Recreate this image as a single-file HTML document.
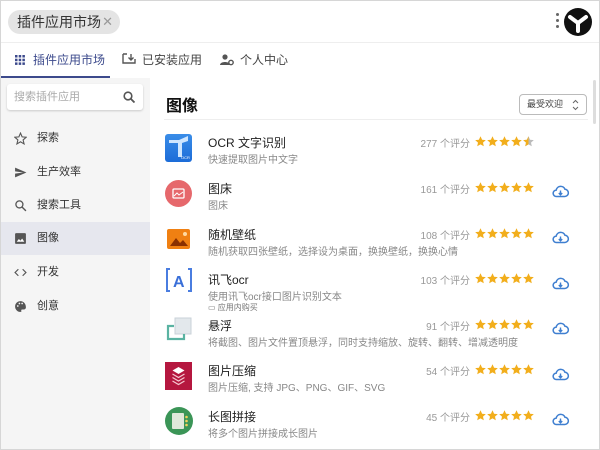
<!DOCTYPE html>
<html><head><meta charset="utf-8"><style>
*{margin:0;padding:0;box-sizing:border-box}
body{width:600px;height:450px;overflow:hidden;background:#fff;font-family:"Liberation Sans","Noto Sans CJK SC",sans-serif;position:relative;color:#222}
.abs{position:absolute}
.frame{position:absolute;left:0;top:0;width:600px;height:450px;border:1px solid #d6d6d6;pointer-events:none}
.chip{left:8px;top:10px;height:24px;width:112px;border-radius:12px;background:#e4e4e4;font-size:14px;line-height:24px;padding-left:9px;color:#333}
.chip span{color:#999;font-size:13px;position:absolute;right:7px;top:0}
.tab{top:52px;font-size:12px;color:#444;line-height:16px}
.sidebar{left:1px;top:78px;width:149px;height:371px;background:#f5f5f5}
.search{left:7px;top:84px;width:136px;height:26px;background:#fff;border-radius:3px;box-shadow:0 1px 2px rgba(0,0,0,.18);font-size:11px;color:#aaa;line-height:26px;padding-left:7px}
.nav{left:1px;width:149px;height:33px;font-size:11px;color:#333;line-height:33px;padding-left:36px}
.nav svg{position:absolute;left:13px;top:10px}
.title{left:208px;font-size:12px;color:#222}
.desc{left:208px;font-size:10px;color:#888}
.cnt{font-size:10px;color:#999;text-align:right;width:80px;left:390px}
.stars{left:475px}
.cloud{left:552px}
</style></head><body>
<svg width="0" height="0" style="position:absolute"><defs>
<path id="s" d="M5.5 0.3l1.6 3.4 3.7.4-2.8 2.5.8 3.7-3.3-1.9-3.3 1.9.8-3.7L.2 4.1l3.7-.4z"/>
<g id="five" fill="#f2ae1c"><use href="#s" x="0"/><use href="#s" x="12"/><use href="#s" x="24"/><use href="#s" x="36"/><use href="#s" x="48"/></g>
<g id="c"><path d="M4.5 11.5a3.2 3.2 0 01-.3-6.4A4.6 4.6 0 0113 4.3a3.6 3.6 0 01-.5 7.2z" fill="none" stroke="#3f7fd0" stroke-width="1.5"/><path d="M8.5 5.5v4M6.8 8l1.7 1.8L10.2 8" stroke="#3f7fd0" stroke-width="1.4" fill="none"/></g>
</defs></svg>
<div class="abs chip">插件应用市场<span>✕</span></div>
<div class="abs" style="left:556px;top:13px;width:3px;height:3px;background:#666;border-radius:50%;box-shadow:0 6px 0 #666,0 12px 0 #666"></div>
<svg class="abs" style="left:564px;top:8px" width="28" height="28" viewBox="0 0 28 28"><circle cx="14" cy="14" r="14" fill="#111"/><path d="M6 9 L14 15 L22 9 M14 15 L14 23" stroke="#fff" stroke-width="4" fill="none" stroke-linecap="round"/></svg>
<div class="abs" style="left:0;top:42px;width:600px;height:1px;background:#eee"></div>
<svg class="abs" style="left:15px;top:55px" width="10" height="10"><g fill="#3c4a8c"><rect x="0" y="0" width="2.5" height="2.5"/><rect x="3.7" y="0" width="2.5" height="2.5"/><rect x="7.4" y="0" width="2.5" height="2.5"/><rect x="0" y="3.7" width="2.5" height="2.5"/><rect x="3.7" y="3.7" width="2.5" height="2.5"/><rect x="7.4" y="3.7" width="2.5" height="2.5"/><rect x="0" y="7.4" width="2.5" height="2.5"/><rect x="3.7" y="7.4" width="2.5" height="2.5"/><rect x="7.4" y="7.4" width="2.5" height="2.5"/></g></svg>
<div class="abs tab" style="left:33px;color:#3c4a8c">插件应用市场</div>
<div class="abs" style="left:1px;top:76px;width:109px;height:2px;background:#3c4a8c"></div>
<svg class="abs" style="left:122px;top:53px" width="14" height="12"><path d="M1 1h4M1 1v9h12V6M9 1v6M6.5 4.5L9 7l2.5-2.5" stroke="#555" stroke-width="1.4" fill="none"/></svg>
<div class="abs tab" style="left:142px">已安装应用</div>
<svg class="abs" style="left:220px;top:54px" width="14" height="12"><circle cx="5" cy="3" r="2.6" fill="#555"/><path d="M0 11c0-4 10-4 10 0z" fill="#555"/><circle cx="11" cy="8.5" r="2.2" fill="none" stroke="#555" stroke-width="1.4"/></svg>
<div class="abs tab" style="left:240px">个人中心</div>
<div class="abs sidebar"></div>
<div class="abs search">搜索插件应用<svg class="abs" style="right:8px;top:7px" width="12" height="12"><circle cx="5" cy="5" r="3.8" stroke="#555" stroke-width="1.6" fill="none"/><path d="M8 8l3.5 3.5" stroke="#555" stroke-width="1.8"/></svg></div>
<div class="abs nav" style="top:122px"><svg width="13" height="13" viewBox="0 0 24 24"><path d="M12 2l3 7 7.5.6-5.7 5 1.8 7.4L12 18l-6.6 4 1.8-7.4-5.7-5L9 9z" fill="none" stroke="#555" stroke-width="2"/></svg>探索</div>
<div class="abs nav" style="top:156px"><svg width="13" height="13" viewBox="0 0 24 24"><path d="M2 21L23 12 2 3v7l15 2-15 2z" fill="#555"/></svg>生产效率</div>
<div class="abs nav" style="top:189px"><svg width="13" height="13" viewBox="0 0 24 24"><circle cx="10" cy="10" r="6.5" stroke="#555" stroke-width="2.4" fill="none"/><path d="M15 15l7 7" stroke="#555" stroke-width="2.6"/></svg>搜索工具</div>
<div class="abs nav" style="top:222px;background:#e6e7ee"><svg width="13" height="13" viewBox="0 0 24 24"><rect x="2" y="2" width="20" height="20" rx="2" fill="#555"/><path d="M5 18l4-5 3 3 3-4 4 6z" fill="#fff"/></svg>图像</div>
<div class="abs nav" style="top:256px"><svg width="13" height="13" viewBox="0 0 24 24"><path d="M8 6l-6 6 6 6M16 6l6 6-6 6" stroke="#555" stroke-width="2.2" fill="none"/></svg>开发</div>
<div class="abs nav" style="top:290px"><svg width="13" height="13" viewBox="0 0 24 24"><path d="M12 2a10 10 0 000 20c1.5 0 2-1 1.5-2-.6-1.2.2-2.5 1.5-2.5H18a4 4 0 004-4C22 6.5 17.5 2 12 2z" fill="#555"/><circle cx="7" cy="11" r="1.6" fill="#f5f5f5"/><circle cx="10" cy="6.5" r="1.6" fill="#f5f5f5"/><circle cx="15" cy="6.5" r="1.6" fill="#f5f5f5"/></svg>创意</div>
<div class="abs" style="left:166px;top:92px;font-size:16px;font-weight:bold;color:#111">图像</div>
<div class="abs" style="left:519px;top:94px;width:68px;height:21px;border:1px solid #bbb;border-radius:4px;font-size:9px;color:#444;line-height:19px;padding-left:7px">最受欢迎<svg class="abs" style="right:7px;top:4px" width="7" height="12"><path d="M1 4l2.5-2.5L6 4M1 8l2.5 2.5L6 8" stroke="#666" fill="none"/></svg></div>
<div class="abs" style="left:164px;top:119px;width:424px;height:1px;background:#eee"></div>
<div class="abs" style="left:593px;top:80px;width:3px;height:44px;background:#ddd;border-radius:2px"></div>

<div class="abs" style="left:165px;top:134px;width:27px;height:28px;background:linear-gradient(#3a8de8,#1c6cd8);border-radius:3px"><svg width="27" height="28"><path d="M4 6h10l9-4v5l-6 2v14h-4V9H4z" fill="#cfe6ff"/><text x="16" y="25" font-size="4" fill="#fff" font-family="Liberation Sans">OCR</text></svg></div>
<div class="abs" style="left:165px;top:180px;width:27px;height:27px;background:#e6686c;border-radius:50%"><svg width="27" height="27"><rect x="8" y="9" width="11" height="9" rx="1" fill="none" stroke="#fff" stroke-width="1.3"/><path d="M9 16l3-3 2 2 4-3" stroke="#fff" fill="none"/></svg></div>
<div class="abs" style="left:167px;top:229px;width:23px;height:20px;background:#f08012;border-radius:2px"><svg width="23" height="20"><path d="M3 17l6-8 4 5 3-3 5 6z" fill="#8a3000"/><circle cx="18" cy="5" r="2" fill="#ffd9a0"/></svg></div>
<div class="abs" style="left:165px;top:265px"><svg width="28" height="30"><path d="M5 4h-3v22h3M23 4h3v22h-3" stroke="#4a7de0" stroke-width="2" fill="none"/><text x="8" y="22" font-size="16" fill="#3a6fd8" font-family="Liberation Sans" font-weight="bold">A</text></svg></div>
<div class="abs" style="left:165px;top:316px"><svg width="28" height="26"><rect x="10" y="2" width="16" height="16" fill="#e3e8ec" stroke="#c9d2d8"/><path d="M9 10H3v13h16v-5" stroke="#5ab3a2" stroke-width="2.2" fill="none"/></svg></div>
<div class="abs" style="left:165px;top:362px;width:27px;height:28px;background:#b5173f"><svg width="27" height="28"><path d="M13.5 5l6 3.5-6 3.5-6-3.5z" fill="#fff"/><path d="M7.5 12l6 3.5 6-3.5M7.5 15.5l6 3.5 6-3.5M7.5 19l6 3.5 6-3.5" stroke="#f5c6d0" stroke-width="1.2" fill="none"/></svg></div>
<div class="abs" style="left:165px;top:407px;width:28px;height:28px;background:#3b9557;border-radius:50%"><svg width="28" height="28"><rect x="7" y="6" width="12" height="16" rx="1" fill="#dfe8d9"/><circle cx="21.5" cy="10" r="1.3" fill="#f3d35a"/><circle cx="21.5" cy="14" r="1.3" fill="#f3d35a"/><circle cx="21.5" cy="18" r="1.3" fill="#f3d35a"/></svg></div>

<div class="abs title" style="top:134px">OCR 文字识别</div><div class="abs desc" style="top:151px">快速提取图片中文字</div>
<div class="abs cnt" style="top:135px">277 个评分</div>
<svg class="abs stars" style="top:136px" width="60" height="11"><g fill="#f2ae1c"><use href="#s" x="0"/><use href="#s" x="12"/><use href="#s" x="24"/><use href="#s" x="36"/></g><use href="#s" x="48" fill="#bbb"/><path d="M53.5 0.3L51.9 3.7 48.2 4.1 51 6.6 50.2 10.3 53.5 8.4z" fill="#f2ae1c"/></svg>

<div class="abs title" style="top:180px">图床</div><div class="abs desc" style="top:197px">图床</div>
<div class="abs cnt" style="top:181px">161 个评分</div><svg class="abs stars" style="top:182px" width="60" height="11"><use href="#five"/></svg>

<div class="abs title" style="top:226px">随机壁纸</div><div class="abs desc" style="top:243px">随机获取四张壁纸，选择设为桌面，换换壁纸，换换心情</div>
<div class="abs cnt" style="top:227px">108 个评分</div><svg class="abs stars" style="top:228px" width="60" height="11"><use href="#five"/></svg>

<div class="abs title" style="top:271px">讯飞ocr</div><div class="abs desc" style="top:288px">使用讯飞ocr接口图片识别文本</div>
<div class="abs desc" style="top:302px;font-size:8px;color:#777">▭ 应用内购买</div>
<div class="abs cnt" style="top:272px">103 个评分</div><svg class="abs stars" style="top:273px" width="60" height="11"><use href="#five"/></svg>

<div class="abs title" style="top:317px">悬浮</div><div class="abs desc" style="top:334px">将截图、图片文件置顶悬浮，同时支持缩放、旋转、翻转、增减透明度</div>
<div class="abs cnt" style="top:318px">91 个评分</div><svg class="abs stars" style="top:319px" width="60" height="11"><use href="#five"/></svg>

<div class="abs title" style="top:362px">图片压缩</div><div class="abs desc" style="top:379px">图片压缩, 支持 JPG、PNG、GIF、SVG</div>
<div class="abs cnt" style="top:363px">54 个评分</div><svg class="abs stars" style="top:364px" width="60" height="11"><use href="#five"/></svg>

<div class="abs title" style="top:408px">长图拼接</div><div class="abs desc" style="top:425px">将多个图片拼接成长图片</div>
<div class="abs cnt" style="top:409px">45 个评分</div><svg class="abs stars" style="top:410px" width="60" height="11"><use href="#five"/></svg>

<svg class="abs cloud" style="top:185px" width="18" height="14"><use href="#c"/></svg>
<svg class="abs cloud" style="top:231px" width="18" height="14"><use href="#c"/></svg>
<svg class="abs cloud" style="top:277px" width="18" height="14"><use href="#c"/></svg>
<svg class="abs cloud" style="top:322px" width="18" height="14"><use href="#c"/></svg>
<svg class="abs cloud" style="top:368px" width="18" height="14"><use href="#c"/></svg>
<svg class="abs cloud" style="top:413px" width="18" height="14"><use href="#c"/></svg>
<div class="frame"></div>
</body></html>
